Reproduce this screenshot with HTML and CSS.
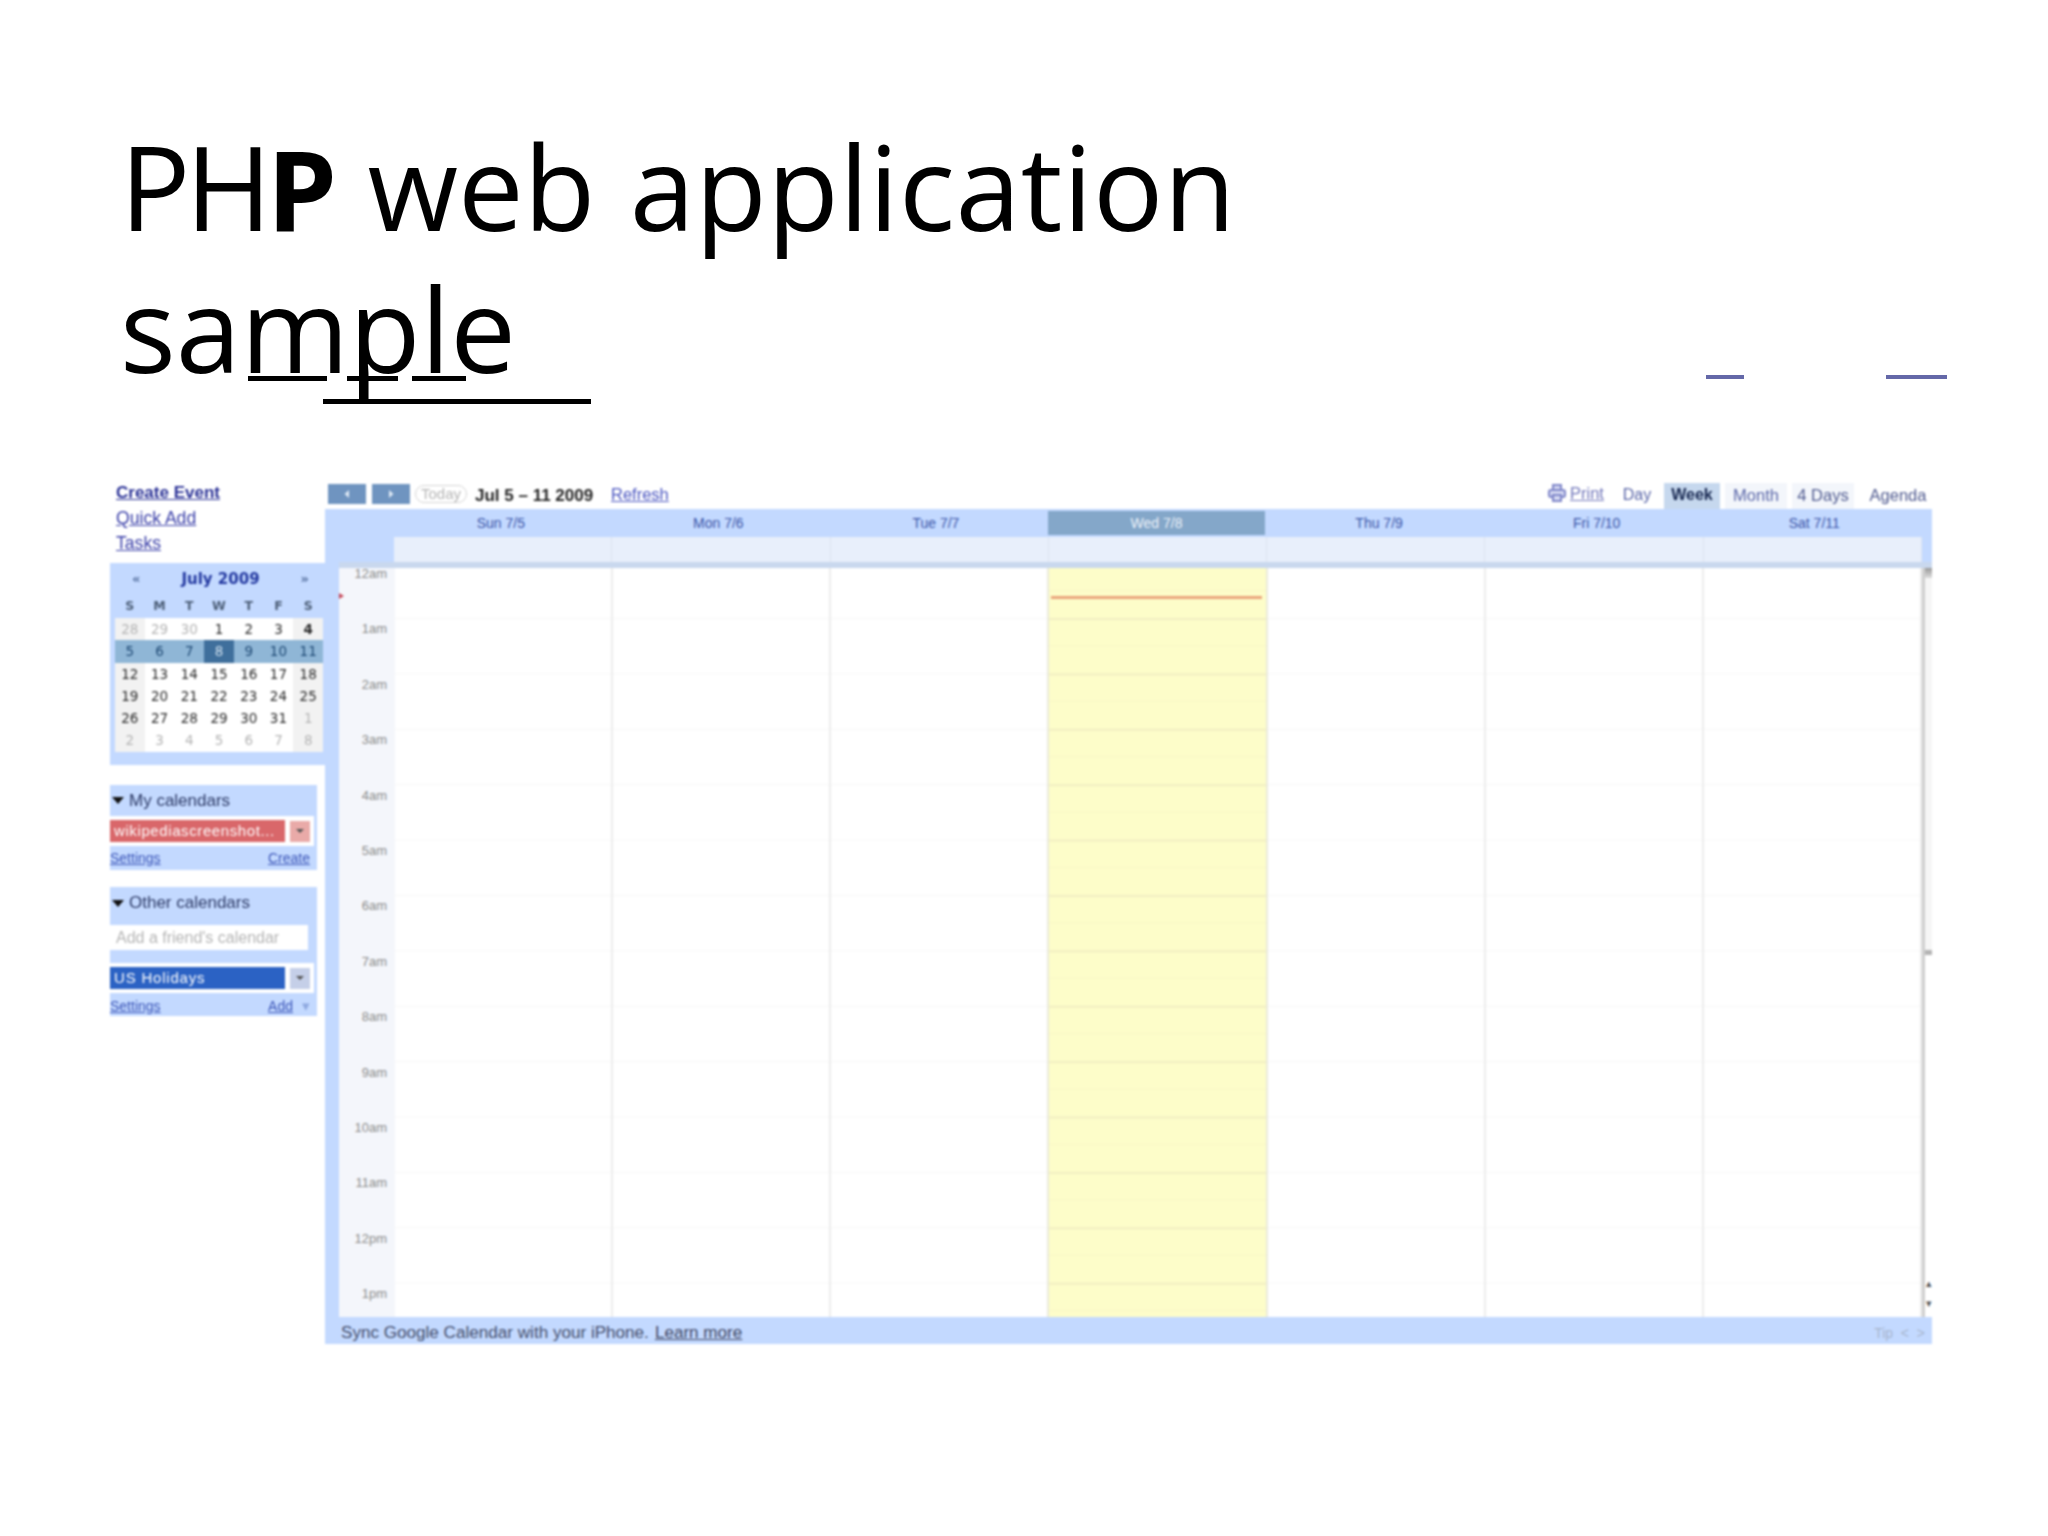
FILE: index.html
```html
<!DOCTYPE html>
<html lang="en">
<head>
<meta charset="utf-8">
<title>PHP web application sample</title>
<link rel="stylesheet" href="styles.css">
</head>
<body>
<main class="slide">
  <h1 class="title"><span class="t-ph">PH</span><b>P</b> <span class="t-web">web</span> <span class="t-app">application</span><br>sample
    <span class="rule rule-m"></span><span class="rule rule-p"></span><span class="rule rule-l"></span><span class="rule rule-low"></span>
  </h1>
  <span class="dash dash-a"></span><span class="dash dash-b"></span>

  <section class="cal">
    <aside class="side">
      <nav class="quick">
        <a class="q-strong">Create Event</a>
        <a>Quick Add</a>
        <a>Tasks</a>
      </nav>
      <div class="mini">
        <div class="mini-title"><span>«</span><strong>July 2009</strong><span>»</span></div>
        <div class="mini-week"><span>S</span><span>M</span><span>T</span><span>W</span><span>T</span><span>F</span><span>S</span></div>
        <div class="mini-grid">
          <div class="mrow"><span class="off end">28</span><span class="off">29</span><span class="off">30</span><span>1</span><span>2</span><span>3</span><span class="end"><b>4</b></span></div>
          <div class="mrow cur"><span>5</span><span>6</span><span>7</span><span class="today">8</span><span>9</span><span>10</span><span>11</span></div>
          <div class="mrow"><span class="end">12</span><span>13</span><span>14</span><span>15</span><span>16</span><span>17</span><span class="end">18</span></div>
          <div class="mrow"><span class="end">19</span><span>20</span><span>21</span><span>22</span><span>23</span><span>24</span><span class="end">25</span></div>
          <div class="mrow"><span class="end">26</span><span>27</span><span>28</span><span>29</span><span>30</span><span>31</span><span class="off end">1</span></div>
          <div class="mrow"><span class="off end">2</span><span class="off">3</span><span class="off">4</span><span class="off">5</span><span class="off">6</span><span class="off">7</span><span class="off end">8</span></div>
        </div>
      </div>

      <div class="panel panel-my">
        <div class="p-head"><i class="caret"></i>My calendars</div>
        <div class="p-row"><span class="chip chip-red">wikipediascreenshot...</span><span class="chip-btn btn-red"><i></i></span></div>
        <div class="p-links"><a>Settings</a><a>Create</a></div>
      </div>

      <div class="panel panel-other">
        <div class="p-head"><i class="caret"></i>Other calendars</div>
        <div class="p-input">Add a friend's calendar</div>
        <div class="p-row"><span class="chip chip-blue">US Holidays</span><span class="chip-btn btn-blue"><i></i></span></div>
        <div class="p-links"><a>Settings</a><span class="add"><a>Add</a><em>▾</em></span></div>
      </div>
    </aside>

    <div class="board">
      <div class="bar">
        <span class="nav"><svg width="10" height="10" viewBox="0 0 10 10"><path d="M7 1 2.5 5 7 9z" fill="#dfe9f5"/></svg></span>
        <span class="nav"><svg width="10" height="10" viewBox="0 0 10 10"><path d="M3 1 7.5 5 3 9z" fill="#dfe9f5"/></svg></span>
        <span class="today-btn">Today</span>
        <span class="range">Jul 5 – 11 2009</span>
        <a class="refresh">Refresh</a>
        <span class="print">
          <svg width="20" height="20" viewBox="0 0 20 20" fill="#d5d9f2" stroke="#7f86c9" stroke-width="2"><path d="M6 7V2h8v5"/><rect x="2" y="7" width="16" height="7" rx="2"/><path d="M6 12h8v6H6z"/></svg>
          <a>Print</a>
        </span>
        <span class="tab t-day">Day</span>
        <span class="tab t-week">Week</span>
        <span class="tab t-month">Month</span>
        <span class="tab t-four">4 Days</span>
        <span class="tab t-agenda">Agenda</span>
      </div>

      <div class="heads">
        <span>Sun 7/5</span><span>Mon 7/6</span><span>Tue 7/7</span><span class="h-today">Wed 7/8</span><span>Thu 7/9</span><span>Fri 7/10</span><span>Sat 7/11</span>
      </div>
      <div class="allday"><i></i><i></i><i></i><i></i><i></i><i></i><i></i></div>
      <div class="band"></div>

      <div class="body">
        <div class="gutter">
          <span>12am</span><span>1am</span><span>2am</span><span>3am</span><span>4am</span><span>5am</span><span>6am</span><span>7am</span><span>8am</span><span>9am</span><span>10am</span><span>11am</span><span>12pm</span><span>1pm</span>
          <i class="now-mark"></i>
        </div>
        <div class="days">
          <div class="day"></div><div class="day"></div><div class="day"></div>
          <div class="day day-today"><i class="now"></i></div>
          <div class="day"></div><div class="day"></div><div class="day"></div>
        </div>
        <div class="scroll">
          <i class="s-cap"></i><i class="s-mid"></i>
          <i class="s-arrow s-up">▴</i><i class="s-arrow">▾</i>
        </div>
      </div>

      <div class="foot">
        <span>Sync Google Calendar with your iPhone.</span><a>Learn more</a>
        <span class="tip">Tip &nbsp;&lt; &nbsp;&gt;</span>
      </div>
    </div>
  </section>
</main>
</body>
</html>
```

FILE: styles.css
```css
* { box-sizing: border-box; }
html, body { margin: 0; background: #fff; }
i, em { font-style: normal; }

.slide {
  position: relative;
  width: 2048px;
  height: 1536px;
  padding-top: 116px;
  overflow: hidden;
}

.title {
  position: relative;
  margin: 0 0 0 120px;
  width: 1300px;
  height: 360px;
  font: 400 117px/140px "Open Sans", "Noto Sans", sans-serif;
  color: #000;
}
.title b { font-weight: 700; font-size: 112px; }
.t-ph { letter-spacing: -5px; }
.t-web { margin-right: 4px; }
.t-app { letter-spacing: .4px; }

.rule { position: absolute; background: #000; height: 5px; }
.rule-m { left: 128px; top: 260px; width: 79px; }
.rule-p { left: 227px; top: 260px; width: 51px; }
.rule-l { left: 292px; top: 260px; width: 54px; }
.rule-low { left: 203px; top: 283px; width: 268px; }

.dash { position: absolute; top: 375px; height: 4px; background: #6468a8; }
.dash-a { left: 1706px; width: 38px; }
.dash-b { left: 1886px; width: 61px; }

.cal {
  position: absolute;
  left: 110px;
  top: 480px;
  display: flex;
  width: 1822px;
  height: 865px;
  filter: blur(0.8px);
  font-family: "Liberation Sans", Arial, sans-serif;
}

/* sidebar */
.side { flex: 0 0 215px; display: flex; flex-direction: column; }
.quick {
  display: flex;
  flex-direction: column;
  height: 83px;
  padding: 3px 0 0 6px;
  gap: 5px;
  font-size: 17.6px;
  line-height: 20px;
}
.quick a { color: #3a3fa8; text-decoration: underline; }
.quick .q-strong { font-size: 17px; font-weight: 700; color: #2a3196; }

.mini { height: 202px; padding: 0 2px 0 5px; background: #c3d9ff; }
.mini-title {
  display: flex;
  justify-content: space-between;
  align-items: center;
  height: 31px;
  padding: 0 14px 0 17px;
  font: 700 15px "DejaVu Sans", sans-serif;
  color: #2338a0;
}
.mini-title span { color: #56709f; font-size: 13px; }
.mini-week, .mrow { display: flex; }
.mini-week { height: 24px; padding-bottom: 2px; align-items: center; font: 700 12.5px "DejaVu Sans", sans-serif; color: #4d5f78; }
.mini-week span, .mrow span { flex: 1; text-align: center; }
.mini-grid { background: #fff; }
.mrow { height: 22.3px; font: 13.5px/22.3px "DejaVu Sans", sans-serif; color: #2a2a2a; }
.mrow .off { color: #b4b4b4; }
.mrow .end { background: #f2f2f2; }
.mrow.cur { background: #8fb6d6; color: #1f4a75; }
.mrow .today { background: #3f6f9c; color: #cfe0ef; }

.panel { width: 207px; background: #c3d9ff; color: #2d3a66; font-size: 17px; }
.panel-my { margin-top: 20px; height: 85px; }
.panel-other { margin-top: 17px; height: 129px; }
.p-head { display: flex; align-items: center; height: 31px; padding-left: 2px; gap: 5px; }
.panel-other .p-head { height: 32px; }
.caret { width: 0; height: 0; border: 6px solid transparent; border-top: 7px solid #111; border-bottom: 0; }
.p-row { display: flex; align-items: center; gap: 5px; height: 30px; width: 204px; background: #fff; }
.chip { display: block; width: 175px; height: 22px; font: 15px/22px "Liberation Sans", sans-serif; padding-left: 4px; color: #fff; white-space: nowrap; overflow: hidden; letter-spacing: .6px; }
.chip-red { background: #d9676a; }
.chip-blue { background: #2b62c4; letter-spacing: .8px; }
.chip-btn { display: flex; align-items: center; justify-content: center; width: 20px; height: 21px; }
.chip-btn i { width: 0; height: 0; border: 4px solid transparent; border-top: 4px solid #555; border-bottom: 0; }
.btn-red { background: #e9aaa8; }
.btn-blue { background: #c5cfe8; }
.p-links { display: flex; justify-content: space-between; align-items: center; height: 24px; padding-right: 7px; font-size: 14px; color: #3b55b8; }
.panel-other .p-links { height: 26px; }
.p-links a { text-decoration: underline; }
.add em { margin-left: 9px; font-size: 15px; color: #8fa9e0; }
.p-input { width: 198px; height: 25px; margin: 6px 0 13px; padding-left: 6px; background: #fff; font-size: 16px; line-height: 25px; color: #b5b5b5; }

/* calendar */
.board { flex: 1; min-width: 0; display: flex; flex-direction: column; position: relative; }
.bar { height: 29px; position: relative; font-size: 16.5px; }
.bar > * { position: absolute; top: 4px; }
.nav { display: flex; align-items: center; justify-content: center; width: 38px; height: 20px; background: #6f94c0; }
.nav:nth-child(1) { left: 3px; }
.nav:nth-child(2) { left: 47px; }
.today-btn { left: 90px; top: 5px; width: 52px; height: 18px; border: 1px solid #d5d5d5; border-radius: 9px; font-size: 15px; line-height: 16px; text-align: center; color: #b5b5b5; }
.range { left: 150px; top: 6px; font-size: 17px; font-weight: 700; color: #222; }
.refresh { left: 286px; top: 5px; color: #4a55c0; text-decoration: underline; }
.print { left: 1222px; top: 3px; display: flex; align-items: center; gap: 3px; color: #7378bb; }
.print a { text-decoration: underline; }
.tab { top: 3px; height: 26px; line-height: 24px; text-align: center; background: #f3f6fb; color: #5a66a8; }
.t-day { left: 1292px; width: 40px; background: #fff; font-size: 16px; }
.t-week { left: 1339px; width: 56px; background: #c6d8ee; color: #16264f; font-weight: 700; font-size: 16px; }
.t-month { left: 1400px; width: 62px; }
.t-four { left: 1467px; width: 62px; color: #4f5a8f; }
.t-agenda { left: 1540px; width: 66px; color: #4f5a8f; background: #fff; }

.heads { display: flex; height: 28px; padding: 2px 9px 2px 67px; background: #c3d9ff; font-size: 14px; line-height: 24px; color: #3b55a8; }
.heads span { flex: 1; text-align: center; }
.heads .h-today { background: #84a7c9; color: #eef3fa; margin: 0 5px 0 3px; }

.allday { display: flex; height: 25px; padding: 0 10px 0 69px; background: linear-gradient(#c3d9ff, #c3d9ff) left / 69px 100% no-repeat, linear-gradient(#c3d9ff, #c3d9ff) right / 10px 100% no-repeat, #e8effb; }
.allday i { flex: 1; border-right: 1px solid #dde4f0; }
.band { height: 6px; background: linear-gradient(#c3d9ff, #c3d9ff) left / 14px 100% no-repeat, #c9d8ee; }

.body { display: flex; height: 749px; padding-left: 14px; background: #c3d9ff; }
.gutter { position: relative; flex: 0 0 56px; display: flex; flex-direction: column; background: #f4f6fb; padding-right: 8px; }
.gutter span { flex: 0 0 55.4px; text-align: right; font-size: 13px; line-height: 11px; color: #8a8a8a; }
.now-mark { position: absolute; left: 0; top: 25px; width: 0; height: 0; border: 3px solid transparent; border-left: 5px solid #c84a5a; }
.days { flex: 1; display: flex; background: #fff; }
.day {
  flex: 1;
  position: relative;
  border-right: 2px solid #ececec;
  background: linear-gradient(#f7f7f7 1px, transparent 1px) 0 50px / 100% 55.4px;
}
.day-today {
  border-left: 2px solid #eaeadc;
  border-right-color: #eaeadc;
  margin-left: -2px;
  background:
    linear-gradient(#f1eec2 2px, transparent 2px) 0 50px / 100% 55.4px,
    linear-gradient(#f8f6c6 1px, transparent 1px) 0 22px / 100% 55.4px,
    #fdfdc9;
}
.now { position: absolute; left: 2px; right: 4px; top: 28px; height: 3px; background: #eaa57c; }
.scroll { position: relative; flex: 0 0 10px; display: flex; flex-direction: column; background: #fff; border-left: 3px solid #cfcfcf; }
.s-cap { height: 10px; background: linear-gradient(#999, #ddd); }
.s-mid { height: 377px; background: #f6f6f6; border-bottom: 5px solid #b4b4b4; }
.s-arrow { font-size: 11px; line-height: 20px; color: #555; text-align: center; }
.s-up { margin-top: 318px; }

.foot { display: flex; align-items: center; height: 27px; padding: 5px 7px 0 16px; background: #c3d9ff; font-size: 17.1px; color: #444e6c; }
.foot a { margin-left: 6px; text-decoration: underline; color: #3e4664; }
.tip { margin-left: auto; font-size: 14px; color: #a7b5cd; }
```
